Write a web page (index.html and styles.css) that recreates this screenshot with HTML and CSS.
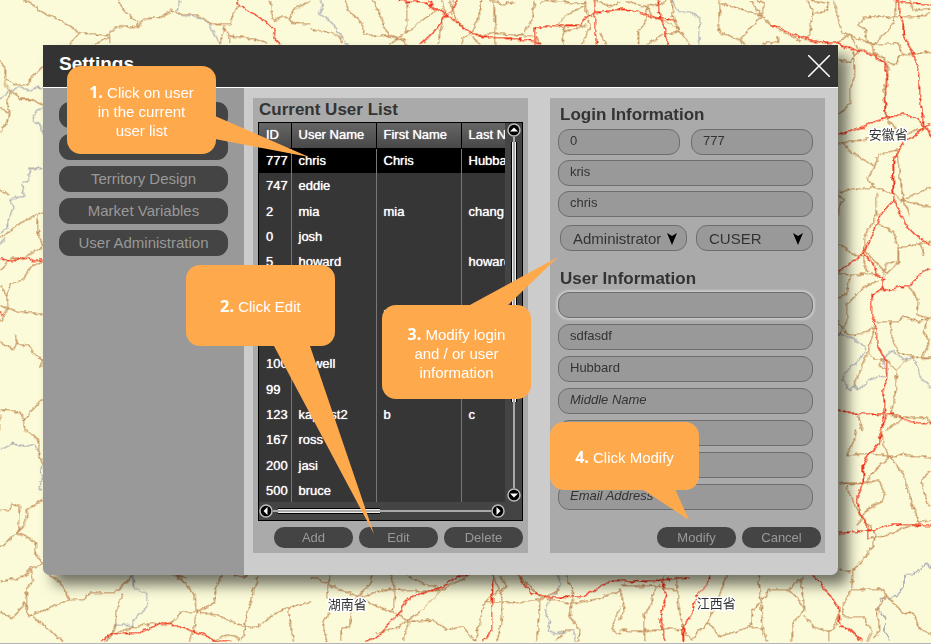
FILE: index.html
```html
<!DOCTYPE html>
<html lang="en">
<head>
<meta charset="utf-8">
<title>Settings</title>
<link rel="stylesheet" href="styles.css">
</head>
<body>
<svg class="map" viewBox="0 0 2793 1932" preserveAspectRatio="xMinYMin slice" aria-hidden="true">
  <defs>
    <filter id="rough" x="0" y="0" width="100%" height="100%" color-interpolation-filters="sRGB">
      <feTurbulence type="fractalNoise" baseFrequency="0.05" numOctaves="2" seed="4"/>
      <feDisplacementMap in="SourceGraphic" scale="14" xChannelSelector="R" yChannelSelector="G"/>
    </filter>
  </defs>
  <g filter="url(#rough)">
    <g class="river">
      <path d="M540 0L530 35L550 48L590 50L630 72L640 100L660 133M0 298L25 275L60 260L85 270L115 262L129 264M129 322L108 335L96 355L122 378L129 400M129 505L90 505L85 545L65 550L72 585L30 600L42 620L30 645"/>
      <path transform="translate(930 0)" d="M30 0L38 25L28 45L62 62L85 95L100 120L112 133"/>
      <path transform="translate(1860 0)" d="M155 0L175 35L210 35L240 55L236 100L240 133"/>
      <path transform="translate(0 645)" d="M28 0L20 40L0 55M0 85L15 70"/>
      <path transform="translate(1860 645)" d="M654 355L700 370L735 395L728 425L680 465L665 495L690 525L700 510L712 525L750 495L800 480L790 430L815 408L850 435L880 428L895 470L910 500L933 517"/>
      <path transform="translate(0 1290)" d="M0 60L40 40L70 50L105 42L118 70M129 105L118 120L129 140L118 170L129 182M400 435L400 470L440 490L440 530L400 570L398 590L345 580L338 612L318 635"/>
      <path transform="translate(930 1290)" d="M740 435L755 460L735 490L710 520L705 545L720 570L712 600L740 612L790 600L800 635"/>
      <path transform="translate(1860 1290)" d="M933 415L918 400L890 430L855 435L850 475L830 498L780 510L770 540L795 555L792 600L812 635"/>
    </g>
    <g class="road">
      <path d="M72 0L100 15L140 45L190 65L238 98L325 107L345 82L375 78L415 85L425 62L460 50L480 52L518 30L545 45L590 45L635 72L690 75L700 38L722 12M355 0L370 30L410 65M415 60L410 85M238 98L222 115L210 133M285 133L330 110L330 133M660 133L672 80L690 108L770 118L800 130M690 108V133M810 0L815 40L822 62M822 62L850 50L868 55L880 70L930 72M868 55L885 25L930 5M0 180L15 205L18 238L45 255L80 255L100 225L129 200M18 238L10 250L35 275L20 300L28 330L20 370L0 398M35 275L60 298L95 298L129 315M0 325L25 340M0 570L30 585M112 645L129 635"/>
      <path transform="translate(930 0)" d="M105 0L115 30L155 70L162 100L200 110L255 108L290 133M185 0L205 30L220 80L240 105L265 120M292 0L290 100M265 110L310 85L335 60L380 30M0 90L60 95L90 110L95 133M240 133L265 115L290 120M395 0L405 40L390 95L385 133M415 0L435 45L445 70L485 100L520 108L545 98L600 105L675 108L690 133M430 0L425 45M515 0L505 60L485 100M485 100L460 115L455 133M485 110L510 133M552 0L555 133M540 0L580 12L620 5M690 12L705 0L735 5L825 10M675 0L665 60L640 100M825 0L830 40L850 50M825 20L775 40L745 70L765 95L830 75M835 45L840 80L815 133M765 75L755 133M850 0L900 20L930 5M870 100L890 133"/>
      <path transform="translate(1860 0)" d="M15 5L80 20L125 10L140 0M80 20L75 70L55 95V133M80 20L95 45L165 80L178 95M155 0L160 50L178 95L130 105L80 133M178 95L210 133M300 0L295 95L360 120L425 45L390 0M300 10L425 45L450 75L545 125M425 45L435 10L410 0M360 120L375 133M425 133L440 125L475 130V105M560 0L578 35L570 95L555 120M580 45L620 30L625 10L570 0M640 0L655 60L665 95L710 115L760 133L800 95L822 60L830 0M645 133L690 105L720 150L690 185L655 180M700 155L705 230L690 260V310L655 345M840 50L800 52L780 45L735 55L712 75L740 90L735 115L755 130M840 50L900 52L933 38M870 0L880 30L930 25M755 133L835 130L850 165L832 170V195L770 180L755 133M850 165L900 160L933 155M720 148L790 170L805 210L792 270L795 350M654 430L760 415L800 405M670 430L690 455L765 500L740 535L765 565L820 580L840 600L933 562M765 500L775 465L830 450L840 530L850 600M765 560L695 570L654 575M654 585L670 600L658 620L654 645M770 580L772 645M840 600L933 622M795 350L845 405L915 385M850 600L870 645"/>
      <path transform="translate(0 645)" d="M105 0L60 25L0 70M110 0L115 55L129 95L70 130L35 130L0 165M129 140L90 155L70 195L35 205L20 240L0 215M20 240L25 280L0 272M25 280L60 290L129 298M25 280L0 320M45 358L50 385L40 405L0 380M50 385L85 390L100 415L125 435L120 460M129 550L70 615L60 590L0 585M70 615L75 645M0 600V645"/>
      <path transform="translate(1860 645)" d="M654 85L680 100L700 120L730 125L740 170M654 175L690 180L775 175M690 180L680 235L654 250M775 195L720 225L680 270L680 320L654 365M765 335L730 355L690 360L670 350M770 0L735 60L735 110L765 140L800 175L835 145L835 100L820 50L785 30L760 30M835 100L905 85L933 78M900 85L915 125M790 185L800 145L830 140M865 215L895 250L890 300L933 310M765 320L835 320L850 305L895 320L925 310L910 350L930 380L905 430L835 415L810 350L815 320M905 430L933 430M765 335L740 420L700 515M745 415L760 430L800 435L830 470L825 550L810 600M865 430L830 465M785 430L780 455L800 460M810 600L885 610L920 605L933 630M715 600L725 645M810 605L850 610L800 645M654 320L680 355"/>
      <path transform="translate(0 1290)" d="M75 0L115 30L118 75L129 105M129 207L82 240L75 285L52 310L60 225L35 220L30 240L0 240M60 290L52 310L0 352M52 310L105 335L110 375L129 402L90 415L75 440L0 455M90 415L100 450L78 480L85 560L75 520L35 565L0 545M85 560L165 525L210 510L250 510L270 488L345 488L385 450L398 435M145 435L180 455L210 510M100 560L190 635M365 490L350 550L345 595L320 635M345 610L400 592L450 582L510 582L545 545L590 545L580 605L570 635M515 435L545 450L580 490L590 545L640 520L650 470L665 435M590 545L650 555L735 590L740 550L775 435M735 590L725 635M735 590L775 590L840 540L930 515M865 535L880 635M640 630L690 615L720 630M515 438L565 440M700 440L745 435"/>
      <path transform="translate(930 1290)" d="M0 440L30 450L90 480L150 500L240 475L330 485L395 480L480 435M60 440L50 500L70 530L38 575L50 635M185 435L180 460L125 520L120 590L95 595L92 635M90 480L150 500L180 520L260 550L295 575L280 635M240 435L255 480L250 540M295 440L330 455L390 475M395 480L330 545L260 595L200 610M295 575L370 570L410 600L460 590L495 635M545 435L570 480L525 515L510 570L495 635M570 440L590 470L570 490L580 515M525 515L580 515L610 520L690 510L750 480M580 515L570 600L560 635M630 440L690 500L750 515L800 520L870 505L930 480M690 510L680 635M770 435L790 490L780 560L810 600L805 635M930 530L905 600L930 612M740 630L765 600L790 600"/>
      <path transform="translate(1860 1290)" d="M710 0L700 40L680 75L755 70L810 80L770 115L735 160M785 0L790 50L810 80L850 72L933 85M810 80L850 135L870 205L895 280M933 120L905 150L915 205L933 230M654 160L730 160L775 150L795 190L785 215L740 240L710 290M680 165L710 240L765 310L760 350L700 420L695 480L665 530L670 560L730 560L755 605L740 635M750 322L800 318L850 295L895 280L933 270M654 420L695 425M0 465L60 470L100 465L170 480M105 470L95 520L70 560L75 635M0 480L15 540L0 570M170 440L175 520L190 600L215 635M320 435L290 520L265 575L220 620L210 635M265 575L300 620L390 590L430 600L415 435M430 600L440 635M390 590L395 545L450 480L500 480L530 500L555 540L520 580L515 635M450 480L425 510M500 480L540 450L550 435M540 450L555 540M555 560L580 590L630 605L650 580L655 540M695 480L780 475L800 495L770 540L780 600L760 625M800 495L850 550L880 550L900 600L933 610M0 600L75 605L150 595L190 600M630 605V635"/>
    </g>
    <g class="highway">
      <path d="M712 0L718 15L770 48L800 65L822 90L825 115L843 133"/>
      <path transform="translate(930 0)" d="M262 0L350 10L362 20L410 42L445 72L485 100L520 112L600 115L670 122L690 133M360 0L365 20M445 0L430 25L410 45L365 105L330 133M675 133V85L715 78L815 75L820 58L850 40L930 28M855 0V95L860 133"/>
      <path transform="translate(1860 0)" d="M0 28L30 28L115 55L165 60M115 0L118 40L135 90L143 133M450 78L475 80L520 105L590 125L655 130L700 148L760 165L795 190L803 230L795 290L797 352M820 0L850 8L933 12M835 0L838 35L850 75L850 105L880 160L893 200L900 290L912 380M654 402L690 395L795 355L850 342L890 355L912 380L890 405L850 425L820 480V575L822 600L780 645M912 375L933 408M912 380L933 375M822 600L840 645"/>
      <path transform="translate(0 645)" d="M0 132L40 138L65 125L105 138L129 135M0 290L8 300"/>
      <path transform="translate(1860 645)" d="M780 0L765 40L730 115L690 145L654 170M730 115L765 155L768 178L790 190L787 222L820 228L835 215L870 212L895 185L910 165L933 160M787 222L757 240L755 300L770 340V390L800 440V490L788 530L795 570L785 645M840 0L865 40L900 70L933 88M654 585L700 595L765 598L820 595L870 620L933 628M800 600L785 645"/>
      <path transform="translate(0 1290)" d="M303 635L338 612L420 608L480 580L530 588L580 603L615 615L645 635M645 632L690 632"/>
      <path transform="translate(930 1290)" d="M165 635L210 618L240 575L270 548L290 510L310 498L370 480L400 470L440 440L475 435M548 435L545 600L520 635M622 435L665 490L710 500L760 502L820 500L860 475L900 455L930 450"/>
      <path transform="translate(1860 1290)" d="M782 0L780 40L745 75L730 105V155L712 205L718 250L740 280L745 325M654 310L760 300L820 282L933 288M0 452L60 455L130 450L210 440M128 440L130 470L138 490L120 575L135 635M270 435L265 460L230 495L215 550L190 590V635M582 435L655 530L660 590L690 598L728 635"/>
    </g>
  </g>
  <g class="place">
    <text x="2606" y="418">安徽省</text>
    <text x="983" y="1827">湖南省</text>
    <text x="2090" y="1823">江西省</text>
  </g>
</svg>

<main class="dialog" aria-labelledby="dialog-title">
  <header class="dialog-header">
    <h1 id="dialog-title">Settings</h1>
    <button class="close" type="button" aria-label="Close">
      <svg viewBox="0 0 22 22"><path d="M0 0L22 22M22 0L0 22"/></svg>
    </button>
  </header>
  <div class="dialog-body">
    <nav class="sidebar">
      <button class="pill" type="button"></button>
      <button class="pill" type="button"></button>
      <button class="pill" type="button">Territory Design</button>
      <button class="pill" type="button">Market Variables</button>
      <button class="pill" type="button">User Administration</button>
    </nav>
    <div class="panels">
      <section class="panel list-panel">
        <h2>Current User List</h2>
        <div class="grid">
          <div class="grid-view">
            <table>
              <colgroup><col class="col-id"><col class="col-name"><col class="col-name"><col class="col-name"></colgroup>
              <thead><tr><th>ID</th><th>User Name</th><th>First Name</th><th>Last Name</th></tr></thead>
              <tbody>
                <tr class="selected"><td>777</td><td>chris</td><td>Chris</td><td>Hubbard</td></tr>
                <tr><td>747</td><td>eddie</td><td></td><td></td></tr>
                <tr><td>2</td><td>mia</td><td>mia</td><td>chang</td></tr>
                <tr><td>0</td><td>josh</td><td></td><td></td></tr>
                <tr><td>5</td><td>howard</td><td></td><td>howard</td></tr>
                <tr><td></td><td></td><td></td><td></td></tr>
                <tr><td></td><td></td><td>r</td><td></td></tr>
                <tr><td></td><td></td><td></td><td></td></tr>
                <tr><td>100</td><td>howell</td><td></td><td></td></tr>
                <tr><td>99</td><td></td><td></td><td></td></tr>
                <tr><td>123</td><td>kaptest2</td><td>b</td><td>c</td></tr>
                <tr><td>167</td><td>ross</td><td></td><td></td></tr>
                <tr><td>200</td><td>jasi</td><td></td><td></td></tr>
                <tr><td>500</td><td>bruce</td><td></td><td></td></tr>
              </tbody>
            </table>
          </div>
          <div class="bar bar-v">
            <button class="arrow" type="button" aria-label="Scroll up"><svg viewBox="0 0 14 14"><circle cx="7" cy="7" r="6"/><path d="M3 8.5L7 4.500L11 8.500Z"/></svg></button>
            <div class="track"><div class="thumb"></div></div>
            <button class="arrow" type="button" aria-label="Scroll down"><svg viewBox="0 0 14 14"><circle cx="7" cy="7" r="6"/><path d="M3 5.500L7 9.500L11 5.500Z"/></svg></button>
          </div>
          <div class="bar bar-h">
            <button class="arrow" type="button" aria-label="Scroll left"><svg viewBox="0 0 14 14"><circle cx="7" cy="7" r="6"/><path d="M8.500 3L4.500 7L8.500 11Z"/></svg></button>
            <div class="track"><div class="thumb"></div></div>
            <button class="arrow" type="button" aria-label="Scroll right"><svg viewBox="0 0 14 14"><circle cx="7" cy="7" r="6"/><path d="M5.500 3L9.500 7L5.500 11Z"/></svg></button>
          </div>
        </div>
        <div class="actions">
          <button class="pill small" type="button">Add</button>
          <button class="pill small" type="button">Edit</button>
          <button class="pill small" type="button">Delete</button>
        </div>
      </section>

      <form class="panel form-panel">
        <h2>Login Information</h2>
        <div class="fields">
          <div class="pair">
            <input type="text" aria-label="ID" value="0">
            <input type="text" aria-label="Number" value="777">
          </div>
          <input type="text" aria-label="User name" value="kris">
          <input type="text" aria-label="Password" value="chris">
        </div>
        <div class="selects">
          <div class="select wide">
            <select aria-label="Role"><option>Administrator</option></select>
            <svg viewBox="0 0 10 12"><path d="M0 0L5 3L10 0L5 12Z"/></svg>
          </div>
          <div class="select">
            <select aria-label="User type"><option>CUSER</option></select>
            <svg viewBox="0 0 10 12"><path d="M0 0L5 3L10 0L5 12Z"/></svg>
          </div>
        </div>
        <h2>User Information</h2>
        <div class="fields loose">
          <input class="active" type="text" aria-label="Title">
          <input type="text" aria-label="First name" value="sdfasdf">
          <input type="text" aria-label="Last name" value="Hubbard">
          <input type="text" aria-label="Middle name" placeholder="Middle Name">
          <input type="text" aria-label="Address">
          <input type="text" aria-label="Phone">
          <input type="text" aria-label="Email address" placeholder="Email Address">
        </div>
        <div class="actions">
          <button class="pill small" type="button">Modify</button>
          <button class="pill small" type="button">Cancel</button>
        </div>
      </form>
    </div>
  </div>

  <div class="callout step-1">
    <svg class="tail"><path d="M148 50L242 91L148 73Z"/></svg>
    <p><b>1.</b> Click on user<br>in the current<br>user list</p>
  </div>
  <div class="callout step-2">
    <svg class="tail"><path d="M88 81L188 269L124 81Z"/></svg>
    <p><b>2.</b> Click Edit</p>
  </div>
  <div class="callout step-3">
    <svg class="tail"><path d="M86 1L176 -48L125 1Z"/></svg>
    <p><b>3.</b> Modify login<br>and / or user<br>information</p>
  </div>
  <div class="callout step-4">
    <svg class="tail"><path d="M92 67L139 98L125 67Z"/></svg>
    <p><b>4.</b> Click Modify</p>
  </div>
</main>
</body>
</html>
```
FILE: styles.css
```css
* {
  box-sizing: border-box;
}

body {
  margin: 0;
  min-height: 100vh;
  padding: 45px 93px 45px 43px;
  overflow: hidden;
  background: #fbfbd9;
  border-bottom: 1px solid #b4b4b8;
  color: #333;
  font-family: "Liberation Sans", Arial, sans-serif;
}

button,
input,
select {
  margin: 0;
  font-family: inherit;
}

h1,
h2,
p {
  margin: 0;
}

/* Map behind the dialog */
.map {
  position: absolute;
  inset: 0;
  width: 100%;
  height: calc(100% - 2px);
}

.map path {
  fill: none;
  stroke-linejoin: round;
  shape-rendering: crispEdges;
}

.river {
  stroke: #b4b4b8;
  stroke-width: 4;
}

.road {
  stroke: #c99763;
  stroke-width: 4;
}

.highway {
  stroke: #f4351c;
  stroke-width: 4;
}

.place {
  fill: #333;
  stroke: #fff;
  stroke-width: 9;
  paint-order: stroke;
  font-family: "Noto Sans CJK SC", sans-serif;
  font-size: 39px;
}

/* Dialog */
.dialog {
  position: relative;
  background: #ccc;
  border-radius: 0 0 7px 7px;
  box-shadow: 10px 10px 14px rgba(0, 0, 0, 0.55);
}

.dialog-header {
  display: flex;
  justify-content: space-between;
  align-items: center;
  height: 43px;
  padding: 0 8px 0 16px;
  background: #333;
  border-bottom: 1px solid #fff;
}

.dialog-header h1 {
  padding-bottom: 4px;
  color: #fff;
  font-size: 19px;
  line-height: 24px;
}

.close {
  padding: 0;
  border: 0;
  background: none;
  line-height: 0;
}

.close svg {
  width: 22px;
  height: 22px;
  stroke: #fff;
  stroke-width: 1.5;
}

.dialog-body {
  display: flex;
}

.sidebar {
  display: flex;
  flex: 0 0 201px;
  flex-direction: column;
  gap: 6px;
  padding: 14px 16px;
  background: #999;
  border-bottom-left-radius: 7px;
}

.pill {
  height: 26px;
  padding: 0 0 1px;
  border: 0;
  border-radius: 11px;
  background: #444;
  color: #999;
  font-size: 15px;
}

.pill.small {
  width: 79px;
  height: 21px;
  border-radius: 10px;
  font-size: 13px;
}

.panels {
  display: grid;
  flex: 1;
  grid-template-columns: minmax(0, 1fr) minmax(0, 1fr);
  gap: 22px;
  padding: 10px 13px 22px 9px;
}

.panel {
  display: flex;
  flex-direction: column;
  background: #aaa;
}

.panel h2 {
  font-size: 17px;
  line-height: 24px;
}

.actions {
  display: flex;
  justify-content: flex-end;
  gap: 6px;
}

/* User list */
.list-panel {
  padding: 0 5px 5px;
}

.list-panel h2 {
  padding-left: 1px;
}

.list-panel .actions {
  padding-top: 6px;
}

.grid {
  display: grid;
  grid-template: 379px 18px / minmax(0, 1fr) 17px;
  background: #444;
  border: 1px solid #000;
}

.grid-view {
  overflow: hidden;
  background: #363636;
}

table {
  width: 287px;
  height: 381px;
  border-collapse: collapse;
  table-layout: fixed;
  color: #fff;
  font-size: 13px;
  text-shadow: 0 0 1px #fff;
}

.col-id {
  width: 32px;
}

.col-name {
  width: 85px;
}

th,
td {
  height: 25px;
  padding: 0 0 0 7px;
  border-right: 1px solid #777;
  font-weight: normal;
  line-height: 16px;
  text-align: left;
  white-space: nowrap;
}

th {
  border-right-color: #000;
  border-bottom: 1px solid #000;
  background: linear-gradient(#666, #484848);
}

td:empty::before {
  content: "\a0";
}

.selected {
  background: #000;
}

.bar {
  display: flex;
  align-items: center;
}

.bar-v {
  flex-direction: column;
}

.arrow {
  flex: none;
  width: 14px;
  height: 14px;
  padding: 0;
  border: 0;
  background: none;
  line-height: 0;
}

.arrow svg {
  width: 14px;
  height: 14px;
}

.arrow circle {
  fill: #000;
  stroke: #bbb;
  stroke-width: 1.5;
}

.arrow path {
  fill: #fff;
}

.track {
  display: flex;
  flex: 1;
}

.bar-v .track {
  flex-direction: column;
  align-items: center;
  width: 6px;
  padding-top: 5px;
  background: linear-gradient(90deg, transparent 2px, #aaa 2px, #aaa 4px, transparent 4px);
}

.bar-v .thumb {
  width: 6px;
  height: 75%;
  border: solid #000;
  border-width: 0 1px;
  background: linear-gradient(90deg, #eee 1px, #aaa 1px, #aaa 3px, #eee 3px);
}

.bar-h .track {
  align-items: center;
  height: 6px;
  padding-left: 5px;
  background: linear-gradient(transparent 2px, #aaa 2px, #aaa 4px, transparent 4px);
}

.bar-h .thumb {
  width: 48%;
  height: 6px;
  border: solid #000;
  border-width: 1px 0;
  background: linear-gradient(#eee 1px, #aaa 1px, #aaa 3px, #eee 3px);
}

/* User form */
.form-panel {
  padding: 5px 4px 5px 8px;
}

.form-panel h2 {
  padding-left: 2px;
}

.fields {
  display: flex;
  flex-direction: column;
  gap: 5px;
  padding: 2px 8px 0 0;
}

.fields.loose {
  gap: 6px;
  padding-top: 1px;
}

.pair {
  display: flex;
  gap: 11px;
}

.fields input,
.select select {
  width: 100%;
  min-width: 0;
  height: 26px;
  border: 1px solid #6e6e6e;
  border-radius: 11px;
  outline: 0;
  background: #999;
  color: #333;
}

.fields input {
  padding: 0 11px 4px;
  font-size: 13px;
}

.fields input::placeholder {
  color: #333;
  font-style: italic;
}

.fields .active {
  box-shadow: 0 0 2px 2px #c8c8c8;
}

.selects {
  display: flex;
  gap: 9px;
  padding: 8px 8px 16px 2px;
}

.select {
  position: relative;
  flex: 1 1 117px;
}

.select.wide {
  flex-basis: 127px;
}

.select select {
  padding: 0 12px;
  appearance: none;
  font-size: 15px;
}

.select svg {
  position: absolute;
  top: 8px;
  right: 10px;
  width: 10px;
  height: 12px;
  pointer-events: none;
}

.form-panel .actions {
  margin-top: auto;
}

/* Numbered callouts over the dialog */
.callout {
  position: absolute;
  display: flex;
  align-items: center;
  justify-content: center;
  width: 149px;
  border-radius: 14px;
  background: #ffa94d;
  color: #fff;
  font-size: 15px;
  line-height: 19px;
  text-align: center;
}

.callout b {
  font-family: "Open Sans", sans-serif;
  font-size: 16px;
  line-height: 16px;
}

.callout p {
  position: relative;
  padding-top: 2px;
}

.tail {
  position: absolute;
  top: 0;
  left: 0;
  width: 100%;
  height: 100%;
  overflow: visible;
  fill: #ffa94d;
}

.step-1 {
  top: 21px;
  left: 24px;
  height: 88px;
}

.step-2 {
  top: 220px;
  left: 143px;
  height: 81px;
}

.step-3 {
  top: 260px;
  left: 339px;
  height: 94px;
}

.step-4 {
  top: 377px;
  left: 507px;
  height: 68px;
}
```
